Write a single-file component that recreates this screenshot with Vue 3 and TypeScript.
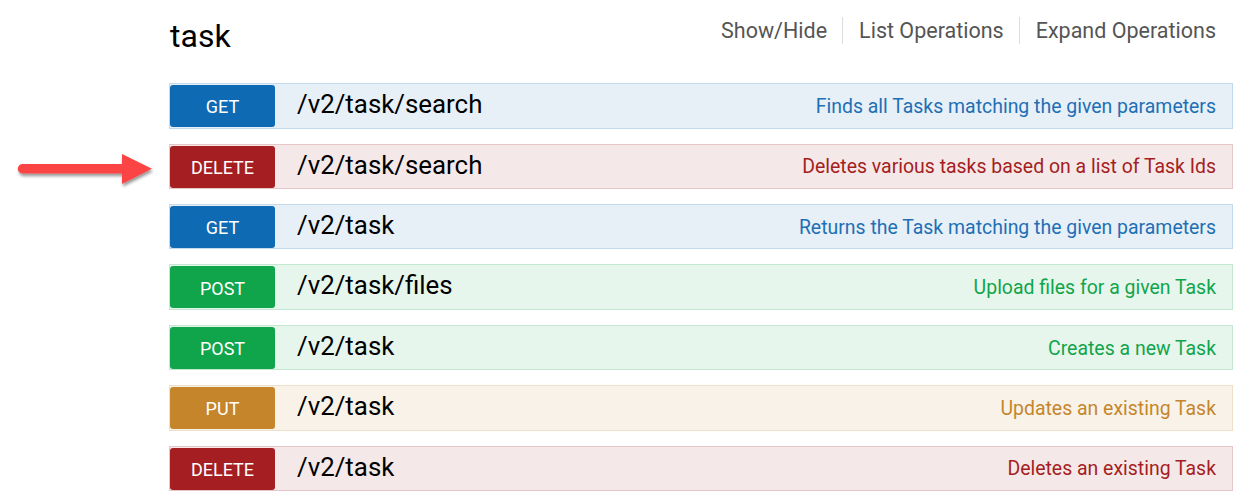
<script setup lang="ts">
interface Op { method: string; path: string; desc: string; kind: string; marked?: boolean }
const ops: Op[] = [
  { method: 'GET', path: '/v2/task/search', desc: 'Finds all Tasks matching the given parameters', kind: 'get' },
  { method: 'DELETE', path: '/v2/task/search', desc: 'Deletes various tasks based on a list of Task Ids', kind: 'del', marked: true },
  { method: 'GET', path: '/v2/task', desc: 'Returns the Task matching the given parameters', kind: 'get' },
  { method: 'POST', path: '/v2/task/files', desc: 'Upload files for a given Task', kind: 'post' },
  { method: 'POST', path: '/v2/task', desc: 'Creates a new Task', kind: 'post' },
  { method: 'PUT', path: '/v2/task', desc: 'Updates an existing Task', kind: 'put' },
  { method: 'DELETE', path: '/v2/task', desc: 'Deletes an existing Task', kind: 'del' },
]
const links = ['Show/Hide', 'List Operations', 'Expand Operations']
</script>

<template>
  <div class="page">
    <header class="head">
      <h2 class="title">task</h2>
      <nav class="links">
        <a v-for="l in links" :key="l" class="link">{{ l }}</a>
      </nav>
    </header>
    <ul class="ops">
      <li v-for="(op, i) in ops" :key="i" class="op" :class="op.kind">
        <span class="method">{{ op.method }}</span>
        <span class="path">{{ op.path }}</span>
        <span class="desc">{{ op.desc }}</span>
        <svg v-if="op.marked" class="arrow" width="140" height="40" viewBox="0 0 140 40">
          <defs>
            <filter id="sh" x="-10%" y="-40%" width="120%" height="190%">
              <feDropShadow dx="1" dy="2.5" stdDeviation="1.8" flood-color="#000" flood-opacity="0.42" />
            </filter>
          </defs>
          <path
            d="M6.5 14 H106 V4 L136 18.7 L106 34 V23.5 H6.5 A4.75 4.75 0 0 1 6.5 14 Z"
            fill="#fb4444"
            filter="url(#sh)"
          />
        </svg>
      </li>
    </ul>
  </div>
</template>

<style>
body { margin: 0; background: #fff; }
</style>

<style scoped>
.page {
  width: 1244px;
  height: 500px;
  box-sizing: border-box;
  padding: 0 11px 0 169px;
  overflow: hidden;
  font-family: Roboto, "Liberation Sans", sans-serif;
}
.head {
  display: flex;
  justify-content: space-between;
  align-items: flex-start;
  height: 83.3px;
  padding-left: 1px;
}
.title {
  margin: 17px 0 0;
  font-size: 32px;
  line-height: 38px;
  font-weight: 400;
  color: #000;
}
.links {
  display: flex;
  margin-top: 17px;
  padding-right: 17px;
}
.link {
  font-size: 21.5px;
  line-height: 27px;
  color: #555;
  padding: 0 15px 0 16px;
  border-right: 1px solid #ddd;
}
.link:last-child { border-right: 0; padding-right: 0; }
.ops {
  list-style: none;
  margin: 0;
  padding: 0;
  display: flex;
  flex-direction: column;
  gap: 15px;
}
.op {
  position: relative;
  display: flex;
  align-items: center;
  height: 45.4px;
  box-sizing: border-box;
  border: 1px solid;
  padding-right: 16px;
}
.method {
  flex: none;
  width: 105px;
  height: 42px;
  display: flex;
  align-items: center;
  justify-content: center;
  border-radius: 3px;
  color: #fff;
  font-size: 18px;
  padding-top: 1.2px;
  box-sizing: border-box;
  position: relative;
  top: 0.3px;
}
.path {
  margin-left: 22px;
  font-size: 25.85px;
  color: #000;
  position: relative;
  top: -1.7px;
}
.desc {
  margin-left: auto;
  font-size: 19.44px;
  position: relative;
  top: 0.6px;
}
.arrow {
  position: absolute;
  left: -154px;
  top: 5px;
}
.get { background: #e7eff7; border-color: #c3d9ec; }
.get .method { background: #0f6ab4; }
.get .desc { color: #1f6fb5; }
.del { background: #f5e8e8; border-color: #e8c6c7; }
.del .method { background: #a41e22; }
.del .desc { color: #a41e22; }
.post { background: #e7f6ec; border-color: #c3e8d1; }
.post .method { background: #10a54a; }
.post .desc { color: #10a54a; }
.put { background: #f9f2e9; border-color: #f0e0ca; }
.put .method { background: #c5862b; }
.put .desc { color: #c5862b; }
</style>
